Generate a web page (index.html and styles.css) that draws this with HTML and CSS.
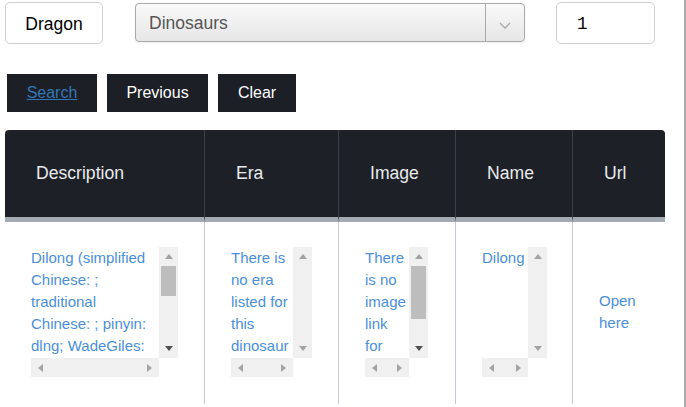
FILE: index.html
```html
<!DOCTYPE html>
<html>
<head>
<meta charset="utf-8">
<link rel="stylesheet" href="styles.css">
</head>
<body>
<div class="page">
  <div class="top-row">
    <button class="name-btn">Dragon</button>
    <div class="select">
      <span class="select-text">Dinosaurs</span>
      <span class="select-arrow">
        <svg width="12" height="7" viewBox="0 0 12 7"><path d="M1 1 L6 6 L11 1" fill="none" stroke="#aaa" stroke-width="1.3"/></svg>
      </span>
    </div>
    <div class="num-input">1</div>
  </div>
  <div class="actions">
    <button class="act act-search"><a class="act-link" href="#">Search</a></button>
    <button class="act act-prev">Previous</button>
    <button class="act act-clear">Clear</button>
  </div>
  <table class="grid">
    <colgroup>
      <col class="c1"><col class="c2"><col class="c3"><col class="c4"><col class="c5">
    </colgroup>
    <thead>
      <tr>
        <th>Description</th>
        <th>Era</th>
        <th>Image</th>
        <th>Name</th>
        <th>Url</th>
      </tr>
    </thead>
    <tbody>
      <tr>
        <td>
          <div class="sbox s-desc">
            <div class="sb-content">Dilong (simplified Chinese: ; traditional Chinese: ; pinyin: dlng; WadeGiles: ti-lung; meaning "emperor dragon") is a genus of small tyrannosauroid dinosaur from the Early Cretaceous Yixian Formation of China.</div>
            <div class="vbar"><span class="btn"><i class="tri up"></i></span><span class="track"><span class="thumb" style="height:30px"></span></span><span class="btn"><i class="tri down dark"></i></span></div>
            <div class="hbar"><span class="btn"><i class="tri left"></i></span><span class="track"></span><span class="btn"><i class="tri right"></i></span></div>
            <div class="corner"></div>
          </div>
        </td>
        <td>
          <div class="sbox s-era">
            <div class="sb-content">There is no era listed for this dinosaur</div>
            <div class="vbar"><span class="btn"><i class="tri up"></i></span><span class="track"></span><span class="btn"><i class="tri down"></i></span></div>
            <div class="hbar"><span class="btn"><i class="tri left"></i></span><span class="track"></span><span class="btn"><i class="tri right"></i></span></div>
            <div class="corner"></div>
          </div>
        </td>
        <td>
          <div class="sbox s-img">
            <div class="sb-content">There is no image link for this dinosaur</div>
            <div class="vbar"><span class="btn"><i class="tri up"></i></span><span class="track"><span class="thumb" style="height:53px"></span></span><span class="btn"><i class="tri down dark"></i></span></div>
            <div class="hbar"><span class="btn"><i class="tri left"></i></span><span class="track"></span><span class="btn"><i class="tri right"></i></span></div>
            <div class="corner"></div>
          </div>
        </td>
        <td>
          <div class="sbox s-name">
            <div class="sb-content">Dilong</div>
            <div class="vbar"><span class="btn"><i class="tri up"></i></span><span class="track"></span><span class="btn"><i class="tri down"></i></span></div>
            <div class="hbar"><span class="btn"><i class="tri left"></i></span><span class="track"></span><span class="btn"><i class="tri right"></i></span></div>
            <div class="corner"></div>
          </div>
        </td>
        <td><a class="open" href="#">Open here</a></td>
      </tr>
    </tbody>
  </table>
</div>
</body>
</html>
```
FILE: styles.css
```css
html, body {
  margin: 0;
  padding: 0;
  background: #fff;
}
.page {
  width: 686px;
  min-height: 407px;
  box-sizing: border-box;
  border-right: 2px solid #a9a9a9;
  font-family: "Liberation Sans", Arial, sans-serif;
}
.top-row {
  display: flex;
  align-items: center;
  padding: 2px 0 0 5px;
  height: 42px;
}
.name-btn {
  width: 98px;
  height: 42px;
  box-sizing: border-box;
  background: #fff;
  border: 1px solid #cfcfcf;
  border-radius: 5px;
  font-family: "Liberation Sans", Arial, sans-serif;
  font-size: 17.5px;
  color: #000;
  padding: 2px 0 0;
  margin-right: 32px;
}
.select {
  width: 390px;
  height: 39px;
  box-sizing: border-box;
  border: 1px solid #aaa;
  border-radius: 4px;
  background: linear-gradient(#f9f9f9, #e6e6e6);
  box-shadow: 0 1px 2px rgba(0,0,0,0.08);
  display: flex;
  align-items: center;
  margin-right: 31px;
  margin-top: -1px;
}
.select-text {
  flex: 1;
  padding-left: 13px;
  padding-top: 1px;
  font-size: 17.5px;
  color: #555;
}
.select-arrow {
  width: 38px;
  height: 100%;
  border-left: 1px solid #aaa;
  display: flex;
  align-items: center;
  justify-content: center;
}
.select-arrow svg {
  margin-top: 6px;
}
.num-input {
  width: 99px;
  height: 42px;
  box-sizing: border-box;
  border: 1px solid #cfcfcf;
  border-radius: 5px;
  padding: 2px 0 0 20px;
  display: flex;
  align-items: center;
  font-family: "Liberation Mono", monospace;
  font-size: 17.5px;
  color: #000;
}
.actions {
  display: flex;
  gap: 10px;
  margin-top: 30px;
  padding-left: 7px;
}
.act {
  height: 38px;
  padding: 0;
  border: 0;
  border-radius: 0;
  background: #1c1f26;
  color: #fff;
  font-family: "Liberation Sans", Arial, sans-serif;
  font-size: 16px;
}
.act-search { width: 90px; }
.act-prev { width: 101px; }
.act-clear { width: 78px; }
.act-link {
  color: #3477b8;
  text-decoration: underline;
}
.grid {
  margin: 18px 0 0 5px;
  width: 660px;
  table-layout: fixed;
  border-collapse: separate;
  border-spacing: 0;
}
.c1 { width: 199px; }
.c2 { width: 134px; }
.c3 { width: 117px; }
.c4 { width: 117px; }
.c5 { width: 93px; }
.grid th {
  height: 92px;
  box-sizing: border-box;
  background: #1d2027;
  color: #e8eaec;
  font-weight: normal;
  font-size: 17.6px;
  text-align: left;
  padding: 0 0 0 31px;
  vertical-align: middle;
  border-bottom: 5px solid #a3aab2;
}
.grid th + th {
  border-left: 1px solid #3a3e47;
}
.grid th:first-child { border-top-left-radius: 4px; }
.grid th:last-child { border-top-right-radius: 4px; }
.grid td {
  padding: 25px 26px 27px;
  vertical-align: middle;
  font-size: 15px;
  line-height: 22px;
  color: #4a90d9;
}
.grid td + td {
  border-left: 1px solid #c9c9db;
}

/* faux scroll boxes */
.sbox {
  display: grid;
  grid-template-columns: 1fr 19px;
  grid-template-rows: 111px 19px;
}
.s-desc { width: 147px; }
.s-era { width: 81px; }
.s-img { width: 63px; }
.s-name { width: 65px; }
.sb-content {
  overflow: hidden;
  word-wrap: break-word;
}
.vbar {
  display: flex;
  flex-direction: column;
  background: #f0f0f0;
}
.hbar {
  display: flex;
  background: #f0f0f0;
}
.corner {
  background: #fff;
}
.btn {
  width: 19px;
  height: 19px;
  flex: none;
  display: flex;
  align-items: center;
  justify-content: center;
}
.track {
  flex: 1;
  display: flex;
  flex-direction: column;
}
.thumb {
  display: block;
  margin: 0 2px;
  background: #bdbdbd;
}
.tri {
  display: block;
  width: 0;
  height: 0;
}
.tri.up {
  border-left: 4.5px solid transparent;
  border-right: 4.5px solid transparent;
  border-bottom: 5px solid #a3a3a3;
}
.tri.down {
  border-left: 4.5px solid transparent;
  border-right: 4.5px solid transparent;
  border-top: 5px solid #a3a3a3;
}
.tri.down.dark {
  border-top-color: #505050;
}
.tri.left {
  border-top: 4.5px solid transparent;
  border-bottom: 4.5px solid transparent;
  border-right: 5px solid #a3a3a3;
}
.tri.right {
  border-top: 4.5px solid transparent;
  border-bottom: 4.5px solid transparent;
  border-left: 5px solid #a3a3a3;
}
.open {
  color: #4a90d9;
  text-decoration: none;
  display: block;
}
```
